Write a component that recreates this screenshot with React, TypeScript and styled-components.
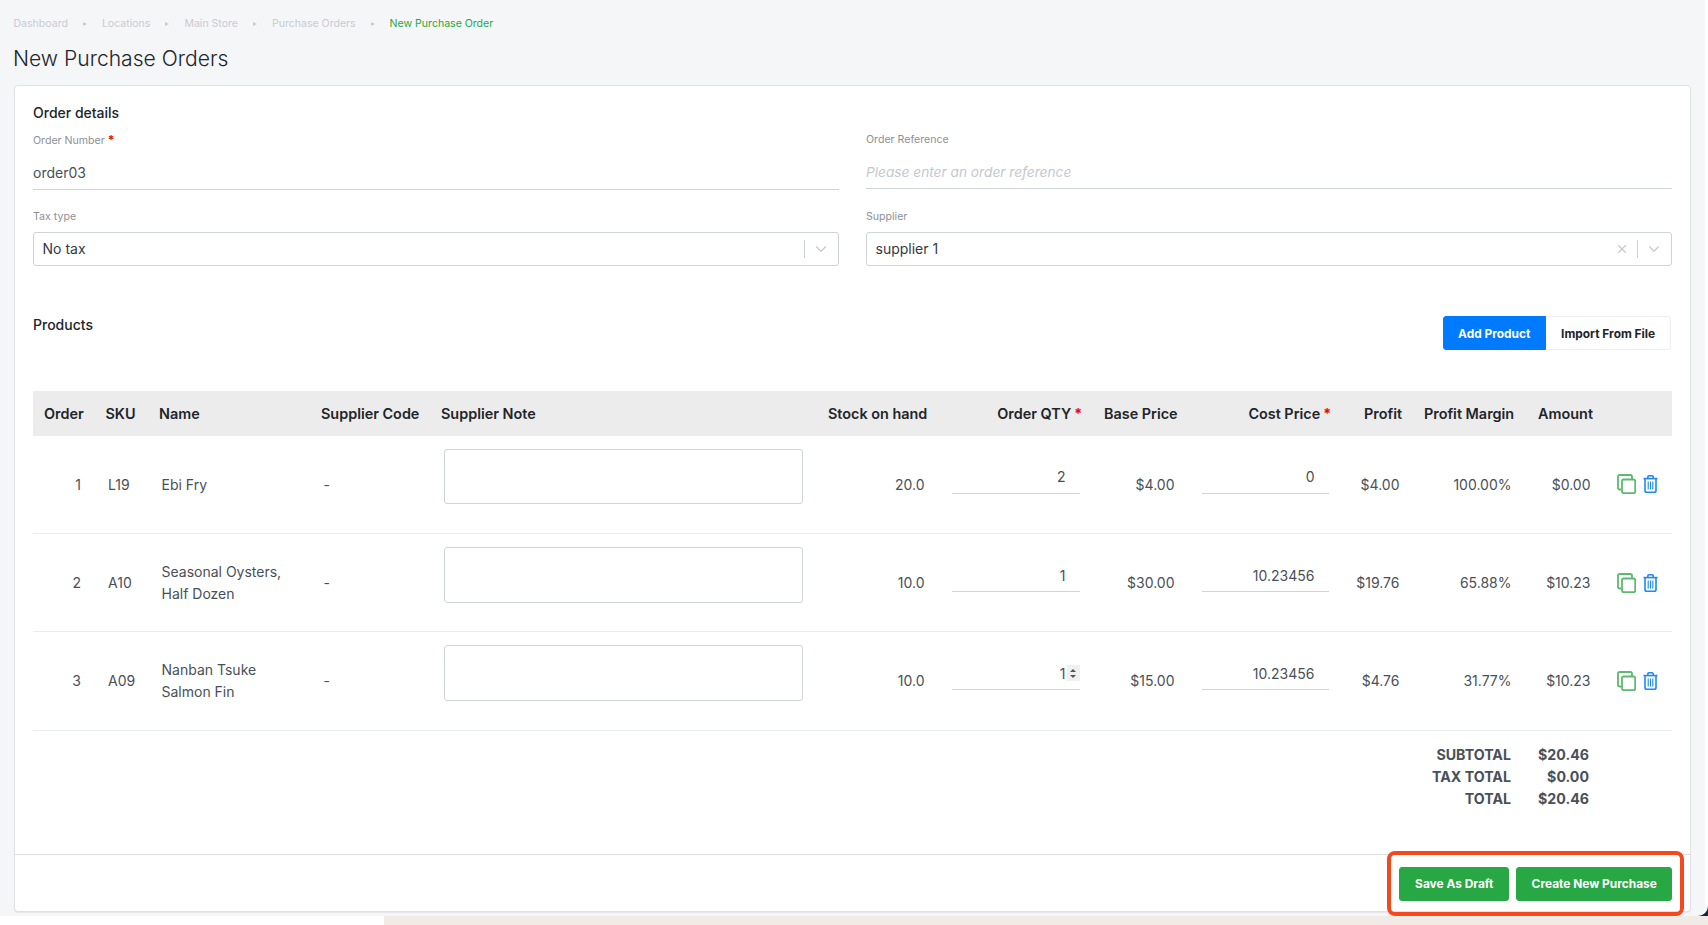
import React from 'react';
import styled, { createGlobalStyle } from 'styled-components';
import { ChevronDown, X } from 'lucide-react';

const GlobalStyle = createGlobalStyle`
  html, body {
    margin: 0;
    padding: 0;
    background: #ffffff;
    font-family: Inter, 'Liberation Sans', sans-serif;
  }
  * {
    box-sizing: border-box;
  }
`;

const Screen = styled.div`
  width: 1708px;
  height: 925px;
  overflow: hidden;
  display: flex;
  flex-direction: column;
`;

const Backdrop = styled.div`
  height: 915.5px;
  background: #14243f;
`;

const Page = styled.main`
  height: 100%;
  background: #f5f6f8;
  border-right: 3px solid #fdfdfe;
  border-bottom-right-radius: 10px;
  padding: 17px 0 0 14px;
`;

const BottomStrip = styled.div`
  flex: 1;
  display: flex;
`;

const StripLeft = styled.div`
  width: 384px;
  background: #ffffff;
`;

const StripRight = styled.div`
  flex: 1;
  background: #f0ebe5;
`;

const Breadcrumbs = styled.nav`
  display: flex;
  align-items: center;
  gap: 15px;
  height: 14px;
  margin-left: -0.5px;
  font-size: 10.55px;
  line-height: 14px;
`;

const Crumb = styled.span<{ $active?: boolean }>`
  color: ${(p) => (p.$active ? '#28a745' : '#c9ccd1')};
`;

const CrumbArrow = styled.i`
  width: 0;
  height: 0;
  border-left: 4px solid #c9ccd1;
  border-top: 2.5px solid transparent;
  border-bottom: 2.5px solid transparent;
`;

const Title = styled.h1`
  margin: 13.5px 0 12.5px -1px;
  font-size: 21.1px;
  line-height: 28px;
  font-weight: 300;
  color: #212529;
`;

const Card = styled.section`
  width: 1677px;
  height: 827px;
  background: #ffffff;
  border: 1px solid #dfe1e4;
  border-radius: 4px;
  box-shadow: 0 1px 1px rgba(0, 0, 0, 0.06);
  display: flex;
  flex-direction: column;
`;

const CardBody = styled.div`
  flex: 1;
  padding: 16.5px 18px 0;
`;

const SectionTitle = styled.h2`
  margin: 0;
  font-size: 14px;
  line-height: 20px;
  font-weight: 500;
  color: #212529;
`;

const ProductsTitle = styled(SectionTitle)`
  margin-top: -1px;
`;

const FormGrid = styled.div`
  display: grid;
  grid-template-columns: 806px 806px;
  column-gap: 27px;
  row-gap: 19.5px;
  margin-top: 10.5px;
`;

const Field = styled.div`
  display: flex;
  flex-direction: column;
`;

const FieldLabel = styled.label`
  font-size: 10.6px;
  line-height: 14px;
  margin-bottom: 8px;
  color: #8d9196;
`;

const Required = styled.span`
  color: #f00000;
  font-size: 12px;
  font-weight: 700;
  margin-left: 3px;
`;

const HeadRequired = styled(Required)`
  font-size: 14px;
`;

const LineInput = styled.input`
  height: 34px;
  border: 0;
  border-bottom: 1px solid #ced4da;
  outline: none;
  padding: 0 0 1px;
  font: 14px Inter, sans-serif;
  color: #495057;
  background: transparent;

  &::placeholder {
    color: #c3c8ce;
    font-size: 13.7px;
    font-style: italic;
    opacity: 1;
  }
`;

const SelectBox = styled.div`
  height: 34.5px;
  display: flex;
  align-items: center;
  border: 1px solid #ced4da;
  border-radius: 3px;
  padding-left: 8.5px;
  font-size: 14px;
  color: #343a40;
`;

const SelectValue = styled.span`
  flex: 1;
`;

const SelectIcons = styled.span`
  display: flex;
  align-items: center;
  color: #c5c7ca;
  padding-right: 8px;
`;

const SelectDivider = styled.i`
  width: 1px;
  height: 18px;
  margin: 0 7px 0 8px;
  background: #cfd2d5;
`;

const ProductsBar = styled.div`
  display: flex;
  justify-content: space-between;
  align-items: flex-start;
  margin-top: 50px;
  margin-bottom: 40.5px;
`;

const ButtonGroup = styled.div`
  display: flex;
  margin-right: 1.5px;
`;

const ActionButton = styled.button<{ $variant: 'blue' | 'white' | 'green'; $pad?: number }>`
  height: 34px;
  border: 1px solid
    ${(p) =>
      p.$variant === 'blue' ? '#007bff' : p.$variant === 'green' ? '#28a745' : '#eeeeee'};
  background: ${(p) =>
    p.$variant === 'blue' ? '#007bff' : p.$variant === 'green' ? '#28a745' : '#ffffff'};
  color: ${(p) => (p.$variant === 'white' ? '#212529' : '#ffffff')};
  padding: 0 ${(p) => p.$pad ?? 14.2}px;
  font: 700 11.9px Inter, sans-serif;
  border-radius: 3px;
`;

const GroupButton = styled(ActionButton)`
  &:first-child {
    border-radius: 3px 0 0 3px;
    padding: 0 14.2px;
  }
  &:last-child {
    border-radius: 0 3px 3px 0;
    border-left: 0;
    padding: 0 14.4px 0 15.6px;
  }
`;

const Table = styled.table`
  width: 1639px;
  table-layout: fixed;
  border-collapse: collapse;
  font-size: 14px;
  color: #495057;
`;

const HeadRow = styled.tr`
  background: #ececec;
  height: 45px;
`;

const HeadCell = styled.th<{ $right?: boolean }>`
  padding: 0 11px;
  font-size: 14.4px;
  font-weight: 600;
  color: #212529;
  text-align: ${(p) => (p.$right ? 'right' : 'left')};
  white-space: nowrap;
`;

const Row = styled.tr`
  height: 98.2px;
  border-bottom: 1px solid #e9ecef;
`;

const Cell = styled.td<{ $right?: boolean }>`
  padding: ${(p) => (p.$right ? '0 13.5px 0 0' : '0 0 0 13.5px')};
  line-height: 21.5px;
  text-align: ${(p) => (p.$right ? 'right' : 'left')};
  vertical-align: middle;
`;

const NoteCell = styled(Cell)`
  padding: 0 14px;
`;

const NoteArea = styled.textarea`
  display: block;
  width: 100%;
  height: 55.5px;
  margin-bottom: 16px;
  border: 1px solid #ced4da;
  border-radius: 3px;
  background: #ffffff;
  resize: none;
  outline: none;
`;

const InputCell = styled(Cell)`
  padding: 0 13.5px;
`;

const NumberWrap = styled.div`
  position: relative;
  margin-bottom: 16px;
`;

const NumberField = styled.input`
  display: block;
  width: 100%;
  height: 35px;
  border: 0;
  border-bottom: 1px solid #ced4da;
  outline: none;
  padding: 2px 14px 0 0;
  text-align: right;
  font: 14px Inter, sans-serif;
  color: #495057;
  background: transparent;
`;

const Spinner = styled.div`
  position: absolute;
  right: 0;
  top: 10px;
  width: 13px;
  height: 16px;
  background: #f0f0f0;
  display: flex;
  flex-direction: column;
  align-items: center;
  justify-content: center;
  gap: 2.5px;
`;

const SpinUp = styled.i`
  width: 0;
  height: 0;
  border-left: 3px solid transparent;
  border-right: 3px solid transparent;
  border-bottom: 3.5px solid #555555;
`;

const SpinDown = styled(SpinUp)`
  border-bottom: 0;
  border-top: 3.5px solid #555555;
`;

const ActionsCell = styled(Cell)`
  padding: 0 0 0 12.5px;
`;

const ActionIcons = styled.div`
  display: flex;
  align-items: center;
  gap: 7.5px;
`;

const Totals = styled.div`
  display: grid;
  grid-template-columns: auto 78px;
  justify-content: end;
  padding: 13px 83px 0 0;
  font-size: 14.2px;
  line-height: 22px;
  font-weight: 700;
  color: #495057;
  text-align: right;
`;

const Footer = styled.footer`
  position: relative;
  display: flex;
  justify-content: flex-end;
  gap: 7px;
  height: 57px;
  padding: 11.5px 18px;
  border-top: 1px solid #dcdee0;
`;

const Highlight = styled.div`
  position: absolute;
  top: -4px;
  right: 6px;
  bottom: -4.5px;
  width: 297px;
  border: 4.5px solid #f4491f;
  border-radius: 8px;
  pointer-events: none;
`;

const CopyIcon = () => (
  <svg width="19" height="20" viewBox="0 0 19 20" fill="none" stroke="#5cb96f" strokeWidth="1.8">
    <path d="M4 15.5H2.6A1.6 1.6 0 0 1 1 13.9V2.6A1.6 1.6 0 0 1 2.6 1h10.8A1.6 1.6 0 0 1 15 2.6V5" />
    <rect x="5" y="5.5" width="13.2" height="13.7" rx="1.6" />
  </svg>
);

const TrashIcon = () => (
  <svg width="15" height="18" viewBox="0 0 15 18" fill="none" stroke="#1e88f5" strokeWidth="1.6">
    <path d="M0.5 3.6h14" />
    <path d="M4.8 3.4V2a1.2 1.2 0 0 1 1.2-1.2h3A1.2 1.2 0 0 1 10.2 2v1.4" />
    <path d="M2 3.8v11.6A1.8 1.8 0 0 0 3.8 17.2h7.4a1.8 1.8 0 0 0 1.8-1.8V3.8" />
    <path d="M5.2 6.5v8M7.5 6.5v8M9.8 6.5v8" strokeWidth="1.1" />
  </svg>
);

const columns: { label: string; width: number; right?: boolean; required?: boolean }[] = [
  { label: 'Order', width: 61.5 },
  { label: 'SKU', width: 53.5 },
  { label: 'Name', width: 162 },
  { label: 'Supplier Code', width: 120 },
  { label: 'Supplier Note', width: 387 },
  { label: 'Stock on hand', width: 121, right: true },
  { label: 'Order QTY', width: 155, right: true, required: true },
  { label: 'Base Price', width: 95, right: true },
  { label: 'Cost Price', width: 154, right: true, required: true },
  { label: 'Profit', width: 71, right: true },
  { label: 'Profit Margin', width: 112, right: true },
  { label: 'Amount', width: 79, right: true },
  { label: '', width: 68 },
];

const rows = [
  { order: 1, sku: 'L19', name: ['Ebi Fry'], stock: '20.0', qty: '2', base: '$4.00', cost: '0', profit: '$4.00', margin: '100.00%', amount: '$0.00' },
  { order: 2, sku: 'A10', name: ['Seasonal Oysters,', 'Half Dozen'], stock: '10.0', qty: '1', base: '$30.00', cost: '10.23456', profit: '$19.76', margin: '65.88%', amount: '$10.23' },
  { order: 3, sku: 'A09', name: ['Nanban Tsuke', 'Salmon Fin'], stock: '10.0', qty: '1', base: '$15.00', cost: '10.23456', profit: '$4.76', margin: '31.77%', amount: '$10.23', spinner: true },
];

const crumbs = ['Dashboard', 'Locations', 'Main Store', 'Purchase Orders'];

export default function App() {
  return (
    <Screen>
      <GlobalStyle />
      <Backdrop>
        <Page>
          <Breadcrumbs>
            {crumbs.map((c) => (
              <React.Fragment key={c}>
                <Crumb>{c}</Crumb>
                <CrumbArrow />
              </React.Fragment>
            ))}
            <Crumb $active>New Purchase Order</Crumb>
          </Breadcrumbs>
          <Title>New Purchase Orders</Title>

          <Card>
            <CardBody>
              <SectionTitle>Order details</SectionTitle>
              <FormGrid>
                <Field>
                  <FieldLabel>
                    Order Number<Required>*</Required>
                  </FieldLabel>
                  <LineInput defaultValue="order03" />
                </Field>
                <Field>
                  <FieldLabel>Order Reference</FieldLabel>
                  <LineInput placeholder="Please enter an order reference" />
                </Field>
                <Field>
                  <FieldLabel>Tax type</FieldLabel>
                  <SelectBox>
                    <SelectValue>No tax</SelectValue>
                    <SelectIcons>
                      <SelectDivider />
                      <ChevronDown size={18} strokeWidth={1.5} />
                    </SelectIcons>
                  </SelectBox>
                </Field>
                <Field>
                  <FieldLabel>Supplier</FieldLabel>
                  <SelectBox>
                    <SelectValue>supplier 1</SelectValue>
                    <SelectIcons>
                      <X size={14} strokeWidth={2} />
                      <SelectDivider />
                      <ChevronDown size={18} strokeWidth={1.5} />
                    </SelectIcons>
                  </SelectBox>
                </Field>
              </FormGrid>

              <ProductsBar>
                <ProductsTitle>Products</ProductsTitle>
                <ButtonGroup>
                  <GroupButton $variant="blue">Add Product</GroupButton>
                  <GroupButton $variant="white">Import From File</GroupButton>
                </ButtonGroup>
              </ProductsBar>

              <Table>
                <colgroup>
                  {columns.map((c, i) => (
                    <col key={i} width={c.width} />
                  ))}
                </colgroup>
                <thead>
                  <HeadRow>
                    {columns.map((c, i) => (
                      <HeadCell key={i} $right={c.right}>
                        {c.label}
                        {c.required && <HeadRequired>*</HeadRequired>}
                      </HeadCell>
                    ))}
                  </HeadRow>
                </thead>
                <tbody>
                  {rows.map((r) => (
                    <Row key={r.order}>
                      <Cell $right>{r.order}</Cell>
                      <Cell>{r.sku}</Cell>
                      <Cell>
                        {r.name.map((line) => (
                          <div key={line}>{line}</div>
                        ))}
                      </Cell>
                      <Cell>-</Cell>
                      <NoteCell>
                        <NoteArea />
                      </NoteCell>
                      <Cell $right>{r.stock}</Cell>
                      <InputCell>
                        <NumberWrap>
                          <NumberField defaultValue={r.qty} />
                          {r.spinner && (
                            <Spinner>
                              <SpinUp />
                              <SpinDown />
                            </Spinner>
                          )}
                        </NumberWrap>
                      </InputCell>
                      <Cell $right>{r.base}</Cell>
                      <InputCell>
                        <NumberWrap>
                          <NumberField defaultValue={r.cost} />
                        </NumberWrap>
                      </InputCell>
                      <Cell $right>{r.profit}</Cell>
                      <Cell $right>{r.margin}</Cell>
                      <Cell $right>{r.amount}</Cell>
                      <ActionsCell>
                        <ActionIcons>
                          <CopyIcon />
                          <TrashIcon />
                        </ActionIcons>
                      </ActionsCell>
                    </Row>
                  ))}
                </tbody>
              </Table>

              <Totals>
                <span>SUBTOTAL</span>
                <span>$20.46</span>
                <span>TAX TOTAL</span>
                <span>$0.00</span>
                <span>TOTAL</span>
                <span>$20.46</span>
              </Totals>
            </CardBody>

            <Footer>
              <ActionButton $variant="green" $pad={15}>Save As Draft</ActionButton>
              <ActionButton $variant="green">Create New Purchase</ActionButton>
              <Highlight />
            </Footer>
          </Card>
        </Page>
      </Backdrop>
      <BottomStrip>
        <StripLeft />
        <StripRight />
      </BottomStrip>
    </Screen>
  );
}
